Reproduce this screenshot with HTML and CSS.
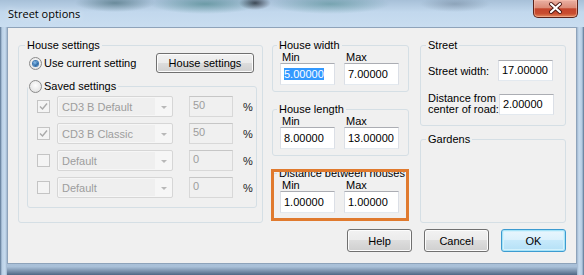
FILE: index.html
```html
<!DOCTYPE html>
<html lang="en">
<head>
    <meta charset="UTF-8">
    <meta name="viewport" content="width=device-width, initial-scale=1.0">
    <title>Street options</title>
    <link rel="stylesheet" href="styles.css">
</head>
<body>
    <div class="window">
        <div class="titlebar">
            <span class="title">Street options</span>
            <button class="close" aria-label="Close">
                <svg width="45" height="18" viewBox="0 0 45 18">
                    <path d="M18 5 L27 13 M27 5 L18 13" stroke="#4a1712" stroke-width="4" stroke-linecap="round"/>
                    <path d="M18 5 L27 13 M27 5 L18 13" stroke="#fff" stroke-width="2.2" stroke-linecap="round"/>
                </svg>
            </button>
        </div>

        <div class="client">
            <div class="columns">
                <!-- left column -->
                <fieldset class="group house-settings">
                    <legend>House settings</legend>
                    <div class="radio-row">
                        <span class="radio checked"></span>
                        <span class="radio-label">Use current setting</span>
                        <button class="btn btn-house">House settings</button>
                    </div>

                    <fieldset class="group saved">
                        <legend><span class="radio"></span><span class="radio-label">Saved settings</span></legend>
                        <div class="saved-row">
                            <span class="check checked"><svg width="11" height="11" viewBox="0 0 11 11"><path d="M2 5.5 L4.5 8 L9 2.5" fill="none" stroke="#a9a9a9" stroke-width="1.4"/></svg></span>
                            <span class="combo"><span class="combo-text">CD3 B Default</span><span class="combo-arrow"></span></span>
                            <span class="pct">50</span>
                            <span class="pct-sign">%</span>
                        </div>
                        <div class="saved-row">
                            <span class="check checked"><svg width="11" height="11" viewBox="0 0 11 11"><path d="M2 5.5 L4.5 8 L9 2.5" fill="none" stroke="#a9a9a9" stroke-width="1.4"/></svg></span>
                            <span class="combo"><span class="combo-text">CD3 B Classic</span><span class="combo-arrow"></span></span>
                            <span class="pct">50</span>
                            <span class="pct-sign">%</span>
                        </div>
                        <div class="saved-row">
                            <span class="check"></span>
                            <span class="combo"><span class="combo-text">Default</span><span class="combo-arrow"></span></span>
                            <span class="pct">0</span>
                            <span class="pct-sign">%</span>
                        </div>
                        <div class="saved-row">
                            <span class="check"></span>
                            <span class="combo"><span class="combo-text">Default</span><span class="combo-arrow"></span></span>
                            <span class="pct">0</span>
                            <span class="pct-sign">%</span>
                        </div>
                    </fieldset>
                </fieldset>

                <!-- middle column -->
                <div class="col-mid">
                    <fieldset class="group range">
                        <legend>House width</legend>
                        <div class="range-labels"><span>Min</span><span>Max</span></div>
                        <div class="range-inputs">
                            <span class="edit"><span class="selected">5.00000</span></span>
                            <span class="edit">7.00000</span>
                        </div>
                    </fieldset>
                    <fieldset class="group range">
                        <legend>House length</legend>
                        <div class="range-labels"><span>Min</span><span>Max</span></div>
                        <div class="range-inputs">
                            <span class="edit">8.00000</span>
                            <span class="edit">13.00000</span>
                        </div>
                    </fieldset>
                    <fieldset class="group range highlight">
                        <legend>Distance between houses</legend>
                        <div class="range-labels"><span>Min</span><span>Max</span></div>
                        <div class="range-inputs">
                            <span class="edit">1.00000</span>
                            <span class="edit">1.00000</span>
                        </div>
                    </fieldset>
                </div>

                <!-- right column -->
                <div class="col-right">
                    <fieldset class="group street">
                        <legend>Street</legend>
                        <div class="field-row">
                            <span>Street width:</span>
                            <span class="edit">17.00000</span>
                        </div>
                        <div class="field-row">
                            <span class="two-line">Distance from<br>center of road:</span>
                            <span class="edit">2.00000</span>
                        </div>
                    </fieldset>
                    <fieldset class="group gardens">
                        <legend>Gardens</legend>
                    </fieldset>
                </div>
            </div>

            <div class="actions">
                <button class="btn btn-dialog">Help</button>
                <button class="btn btn-dialog">Cancel</button>
                <button class="btn btn-dialog btn-default">OK</button>
            </div>
        </div>
    </div>
</body>
</html>
```

FILE: styles.css
```css
* {
    box-sizing: border-box;
}
body {
    margin: 0;
    font-family: "Liberation Sans", Arial, sans-serif;
    font-size: 11px;
    color: #000;
    background: #fff;
}

/* window frame */
.window {
    width: 584px;
    height: 275px;
    display: flex;
    flex-direction: column;
    background:
        linear-gradient(to right, #56718f 0, #b9cfe5 2px, #c7dbee 5px, #9fb6cf 7px, transparent 7px, transparent 577px, #9fb6cf 577px, #c7dbee 579px, #b4cbe2 582px, #56718f 584px),
        linear-gradient(#b6cde4, #c5d9ed 60%, #a9c0d8 97%, #4f6784 100%);
}
.titlebar {
    height: 27px;
    display: flex;
    align-items: flex-start;
    padding-left: 8px;
    background:
        radial-gradient(ellipse 40px 9px at 115px 3px, rgba(50, 90, 100, 0.55), transparent),
        radial-gradient(ellipse 55px 10px at 205px 4px, rgba(40, 110, 110, 0.5), transparent),
        radial-gradient(ellipse 16px 7px at 255px 3px, rgba(25, 30, 40, 0.75), transparent),
        radial-gradient(ellipse 60px 10px at 330px 4px, rgba(50, 120, 120, 0.45), transparent),
        radial-gradient(ellipse 35px 8px at 455px 4px, rgba(90, 110, 130, 0.4), transparent),
        linear-gradient(#a7c0d8, #c2d8ed 45%, #c9ddf0);
}
.title {
    font-family: "Open Sans", "Noto Sans", sans-serif;
    font-size: 11px;
    line-height: 27px;
    color: #000;
    text-shadow: 0 0 6px rgba(255, 255, 255, 0.9);
}
.close {
    margin-left: auto;
    margin-right: 6px;
    width: 45px;
    height: 18px;
    padding: 0;
    border: 1px solid #5b231b;
    border-top: none;
    border-radius: 0 0 5px 5px;
    background: linear-gradient(#eab0a3 0%, #dc8c78 45%, #c4452c 52%, #c94d30 80%, #e28b5e 100%);
    box-shadow: inset 0 0 0 1px rgba(255, 200, 180, 0.5);
}
.close svg {
    display: block;
    margin: -1px 0 0 -1px;
}

/* client area */
.client {
    height: 237px;
    margin: 0 7px;
    border: 1px solid #8ea3ba;
    background: #f0f0f0;
    padding: 11px 10px 0 10px;
}
.columns {
    display: flex;
    gap: 9px;
    height: 184px;
}

/* group boxes */
.group {
    margin: 0;
    padding: 0;
    min-width: 0;
    border: 1px solid #d5dfe5;
    border-radius: 3px;
}
.group legend {
    padding: 0 2px;
    margin-left: 5px;
    line-height: 13px;
    white-space: nowrap;
}

.house-settings {
    width: 245px;
    padding: 1px 5px 13px 8px;
}
.house-settings > legend {
    margin-left: -2px;
}
.radio-row {
    display: flex;
    align-items: center;
    height: 20px;
    padding: 0 3px 0 2px;
}
.radio {
    width: 13px;
    height: 13px;
    border-radius: 50%;
    border: 1px solid #8b8b8b;
    background: radial-gradient(circle at 50% 40%, #fdfdfd, #dcdcdc);
    flex-shrink: 0;
    display: flex;
    align-items: center;
    justify-content: center;
}
.radio.checked::after {
    content: "";
    width: 5px;
    height: 5px;
    border-radius: 50%;
    background: radial-gradient(circle at 40% 35%, #8ec4f2, #1b5a98 70%);
    box-shadow: 0 0 0 1px #3b78b4;
}
.radio-label {
    margin-left: 2px;
}
.saved legend {
    display: flex;
    align-items: center;
    margin-left: -9px;
    padding: 0 2px 0 1px;
}

.saved {
    margin-top: 7px;
    padding: 3px 0 9px 9px;
    display: flex;
    flex-direction: column;
    gap: 6px;
}
.saved-row {
    display: flex;
    align-items: center;
    height: 21px;
}
.check {
    width: 13px;
    height: 13px;
    border: 1px solid #c4c4c4;
    background: #f4f4f4;
    margin-right: 7px;
    display: flex;
    align-items: center;
    justify-content: center;
}
.check svg {
    display: block;
}
.combo {
    width: 116px;
    height: 21px;
    display: flex;
    border: 1px solid #d6d6d6;
    border-radius: 2px;
    background: #f6f6f6;
    color: #9d9d9d;
    margin-right: 16px;
}
.combo-text {
    flex: 1;
    padding: 1px 3px;
    line-height: 17px;
    background: #efefef;
    margin: 1px 0 1px 1px;
}
.combo-arrow {
    width: 17px;
    position: relative;
}
.combo-arrow::after {
    content: "";
    position: absolute;
    left: 6px;
    top: 9px;
    border-left: 3px solid transparent;
    border-right: 3px solid transparent;
    border-top: 3px solid #b8b8b8;
}
.pct {
    width: 44px;
    height: 21px;
    border: 1px solid #d8d8d8;
    border-top-color: #c6c6c6;
    background: #f0f0f0;
    color: #9d9d9d;
    padding: 1px 3px;
    line-height: 14px;
}
.pct-sign {
    margin-left: 10px;
    color: #222;
}

.btn {
    font-family: "Liberation Sans", Arial, sans-serif;
    font-size: 11px;
    color: #000;
    border: 1px solid #707070;
    border-radius: 3px;
    background: linear-gradient(#f2f2f2 0%, #ebebeb 50%, #dddddd 50%, #cfcfcf 100%);
    box-shadow: inset 0 0 0 1px #fcfcfc;
    padding: 0;
}
.btn-house {
    margin-left: auto;
    width: 98px;
    height: 20px;
}

/* middle column */
.col-mid {
    width: 137px;
    display: flex;
    flex-direction: column;
    gap: 11px;
}
.range {
    padding: 0 9px 6px 7px;
}
.range legend {
    margin-left: -3px;
}
.range-labels,
.range-inputs {
    display: grid;
    grid-template-columns: 55px 55px;
    column-gap: 9px;
}
.range-labels {
    line-height: 12px;
    margin-top: -1px;
}
.range-labels span {
    padding-left: 2px;
}
.edit {
    display: block;
    height: 22px;
    line-height: 20px;
    padding: 0 3px;
    background: #fff;
    border: 1px solid #dbdfe6;
    border-top-color: #abadb3;
    border-bottom-color: #e3e9ef;
    white-space: nowrap;
}
.selected {
    background: #3399ff;
    color: #fff;
}
.highlight {
    position: relative;
}
.highlight::after {
    content: "";
    position: absolute;
    top: -11px;
    left: -2px;
    right: -1px;
    bottom: -2px;
    border: 3px solid #e07a2e;
    pointer-events: none;
}

/* right column */
.col-right {
    width: 146px;
    margin-left: 2px;
    display: flex;
    flex-direction: column;
    gap: 7px;
}
.street {
    padding: 8px 12px 10px 7px;
}
.street legend {
    margin-left: -2px;
}
.field-row {
    display: flex;
    align-items: center;
    justify-content: space-between;
}
.field-row + .field-row {
    margin-top: 12px;
}
.field-row .edit {
    width: 55px;
    height: 21px;
    line-height: 19px;
    flex-shrink: 0;
}
.two-line {
    line-height: 11px;
    white-space: nowrap;
}
.gardens {
    flex: 1;
}

/* dialog buttons */
.actions {
    display: flex;
    justify-content: flex-end;
    gap: 12px;
    margin-top: 6px;
}
.btn-dialog {
    width: 65px;
    height: 23px;
}
.btn-default {
    border-color: #3c9bd0;
    background: linear-gradient(#eaf6fd 0%, #d9f0fc 50%, #c6e9fb 50%, #b4e0f6 100%);
    box-shadow: inset 0 0 0 1px #a6e3f8, inset 0 0 0 2px #d4f1fc;
}
```
